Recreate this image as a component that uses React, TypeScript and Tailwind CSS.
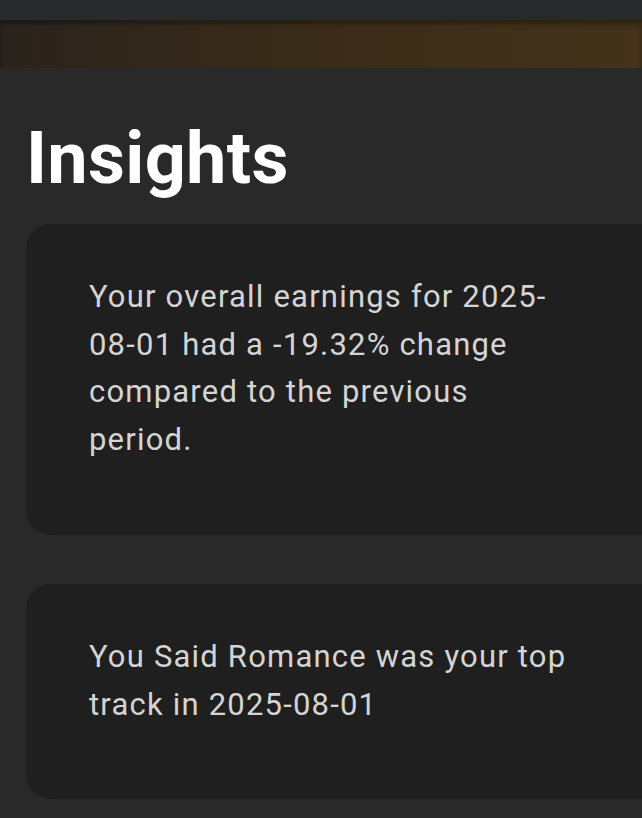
import React from "react";

export default function App() {
  return (
    <div className="w-[642px] h-[818px] overflow-hidden bg-[#292929]" style={{ fontFamily: "Roboto, 'Liberation Sans', sans-serif" }}>
      <div className="h-[20px] bg-[#28292b]" />
      <div className="h-[48px] bg-gradient-to-r from-[#2a231d] via-[#3a2c19] to-[#44331a] shadow-[inset_0_4px_4px_rgba(0,0,0,0.35)]" />
      <div className="pl-[26px]">
        <h1 className="pt-[49px] text-[72px] leading-[84px] font-bold text-white tracking-[0.3px]">Insights</h1>
        <div className="mt-[23px] flex flex-col gap-[49px]">
          <div className="w-[640px] rounded-l-[25px] bg-[#1f1f1f] pl-[63px] pt-[49px] h-[311px]">
            <p className="w-[472px] text-[31px] leading-[47.5px] tracking-[1.2px] text-[#d4d4d4]">
              Your overall earnings for 2025-08-01 had a -19.32% change compared to the previous period.
            </p>
          </div>
          <div className="w-[640px] rounded-l-[25px] bg-[#1f1f1f] pl-[63px] pt-[49px] h-[215px]">
            <p className="w-[505px] text-[31px] leading-[47.5px] tracking-[1.2px] text-[#d4d4d4]">
              You Said Romance was your top track in 2025-08-01
            </p>
          </div>
        </div>
      </div>
    </div>
  );
}
